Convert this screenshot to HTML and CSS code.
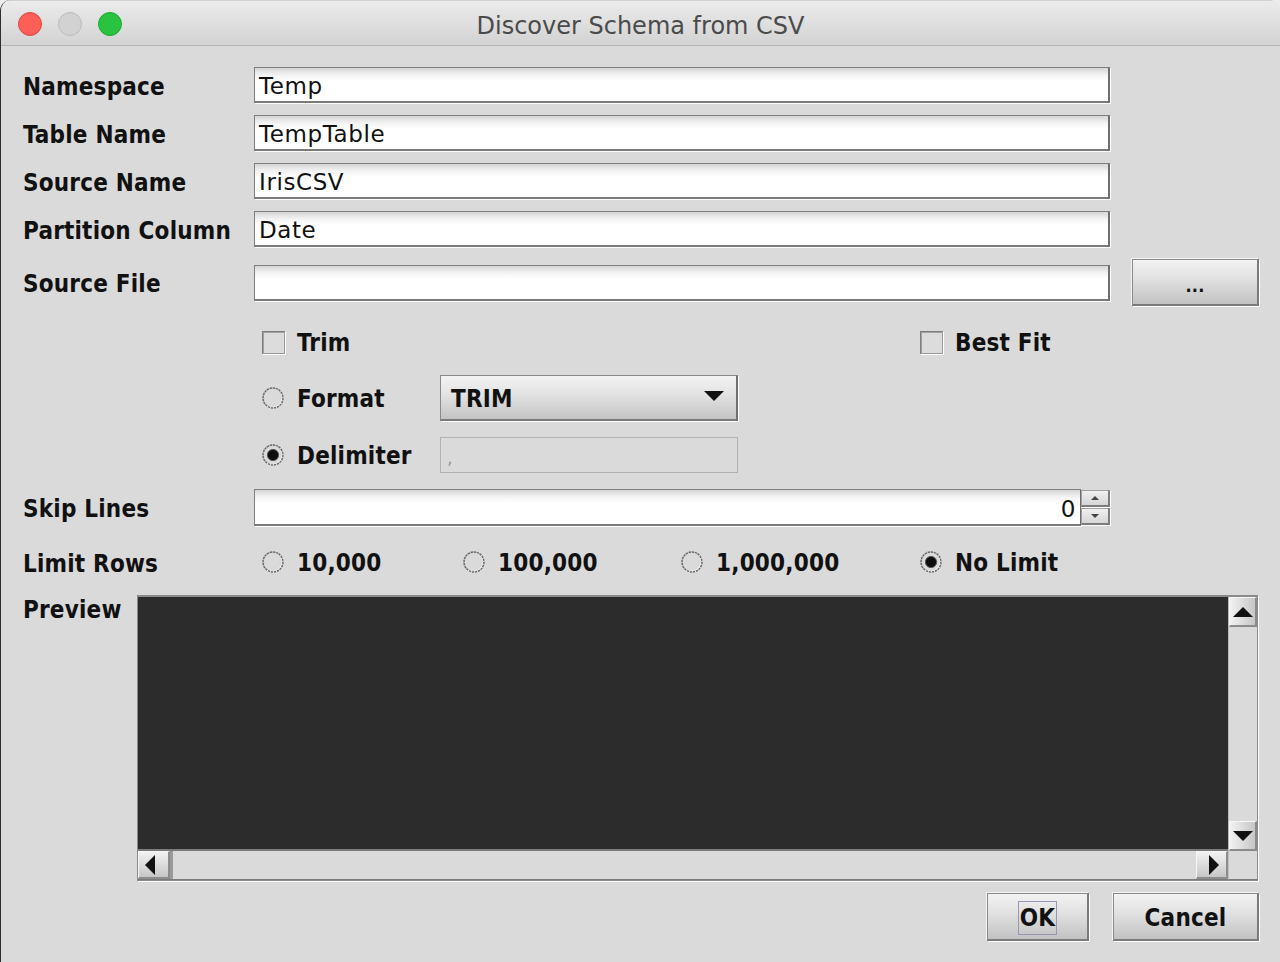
FILE: index.html
```html
<!DOCTYPE html>
<html>
<head>
<meta charset="utf-8">
<title>Discover Schema from CSV</title>
<link rel="stylesheet" href="styles.css">
</head>
<body>
<div class="window">
  <div class="titlebar">
    <div class="lights">
      <span class="light red"></span>
      <span class="light gray"></span>
      <span class="light green"></span>
    </div>
    <div class="title">Discover Schema from CSV</div>
    <div></div>
  </div>

  <div class="content">
    <div class="row r1">
      <div class="lbl">Namespace</div>
      <div class="tf">Temp</div>
    </div>
    <div class="row r2">
      <div class="lbl">Table Name</div>
      <div class="tf">TempTable</div>
    </div>
    <div class="row r2">
      <div class="lbl">Source Name</div>
      <div class="tf">IrisCSV</div>
    </div>
    <div class="row r2">
      <div class="lbl">Partition Column</div>
      <div class="tf">Date</div>
    </div>
    <div class="row file-row">
      <div class="lbl">Source File</div>
      <div class="tf"></div>
      <div class="btn dots">...</div>
    </div>

    <div class="opt-row trim-row">
      <div class="opt w-trim"><span class="cb"></span><span class="opt-text">Trim</span></div>
      <div class="opt"><span class="cb"></span><span class="opt-text">Best Fit</span></div>
    </div>

    <div class="opt-row format-row">
      <div class="opt w-fmt">
        <svg class="radio" viewBox="0 0 24 24" width="24" height="24"><path d="M4.6 19.4 A10.5 10.5 0 0 0 19.4 4.6" fill="none" stroke="#fff" stroke-width="1.8"/><circle cx="12" cy="12" r="10" fill="none" stroke="#6a6a6a" stroke-width="1.5" stroke-dasharray="2.4 0.7"/></svg>
        <span class="opt-text">Format</span>
      </div>
      <div class="combo"><span class="combo-text">TRIM</span><svg class="combo-arrow" viewBox="0 0 20 10" width="20" height="10"><polygon points="0,0 20,0 10,10" fill="#111"/></svg></div>
    </div>

    <div class="opt-row delim-row">
      <div class="opt w-fmt">
        <svg class="radio" viewBox="0 0 24 24" width="24" height="24"><path d="M4.6 19.4 A10.5 10.5 0 0 0 19.4 4.6" fill="none" stroke="#fff" stroke-width="1.8"/><circle cx="12" cy="12" r="10" fill="none" stroke="#6a6a6a" stroke-width="1.5" stroke-dasharray="2.4 0.7"/><circle cx="12" cy="12" r="5.6" fill="#0d0d0d" stroke="#555" stroke-width="1"/></svg>
        <span class="opt-text">Delimiter</span>
      </div>
      <div class="tf disabled">,</div>
    </div>

    <div class="row skip-row">
      <div class="lbl">Skip Lines</div>
      <div class="spinner">
        <div class="tf num">0</div>
        <div class="spin-btns">
          <div class="sb"><svg viewBox="0 0 8 4" width="8" height="4"><polygon points="0,4 8,4 4,0" fill="#444"/></svg></div>
          <div class="sb"><svg viewBox="0 0 8 4" width="8" height="4"><polygon points="0,0 8,0 4,4" fill="#444"/></svg></div>
        </div>
      </div>
    </div>

    <div class="row limit-row">
      <div class="lbl">Limit Rows</div>
      <div class="limits">
        <div class="opt w-l1">
          <svg class="radio" viewBox="0 0 24 24" width="24" height="24"><path d="M4.6 19.4 A10.5 10.5 0 0 0 19.4 4.6" fill="none" stroke="#fff" stroke-width="1.8"/><circle cx="12" cy="12" r="10" fill="none" stroke="#6a6a6a" stroke-width="1.5" stroke-dasharray="2.4 0.7"/></svg>
          <span class="opt-text">10,000</span>
        </div>
        <div class="opt w-l2">
          <svg class="radio" viewBox="0 0 24 24" width="24" height="24"><path d="M4.6 19.4 A10.5 10.5 0 0 0 19.4 4.6" fill="none" stroke="#fff" stroke-width="1.8"/><circle cx="12" cy="12" r="10" fill="none" stroke="#6a6a6a" stroke-width="1.5" stroke-dasharray="2.4 0.7"/></svg>
          <span class="opt-text">100,000</span>
        </div>
        <div class="opt w-l3">
          <svg class="radio" viewBox="0 0 24 24" width="24" height="24"><path d="M4.6 19.4 A10.5 10.5 0 0 0 19.4 4.6" fill="none" stroke="#fff" stroke-width="1.8"/><circle cx="12" cy="12" r="10" fill="none" stroke="#6a6a6a" stroke-width="1.5" stroke-dasharray="2.4 0.7"/></svg>
          <span class="opt-text">1,000,000</span>
        </div>
        <div class="opt">
          <svg class="radio" viewBox="0 0 24 24" width="24" height="24"><path d="M4.6 19.4 A10.5 10.5 0 0 0 19.4 4.6" fill="none" stroke="#fff" stroke-width="1.8"/><circle cx="12" cy="12" r="10" fill="none" stroke="#6a6a6a" stroke-width="1.5" stroke-dasharray="2.4 0.7"/><circle cx="12" cy="12" r="5.6" fill="#0d0d0d" stroke="#555" stroke-width="1"/></svg>
          <span class="opt-text">No Limit</span>
        </div>
      </div>
    </div>

    <div class="preview-row">
      <div class="lbl plbl">Preview</div>
      <div class="scrollpane">
        <div class="viewport"></div>
        <div class="vbar">
          <div class="sbtn vbtn"><svg viewBox="0 0 20 10" width="20" height="10"><polygon points="0,10 20,10 10,0" fill="#111"/></svg></div>
          <div class="vtrack"></div>
          <div class="sbtn vbtn"><svg viewBox="0 0 20 10" width="20" height="10"><polygon points="0,0 20,0 10,10" fill="#111"/></svg></div>
        </div>
        <div class="hbar">
          <div class="sbtn hbtn"><svg viewBox="0 0 10 20" width="10" height="20"><polygon points="10,0 10,20 0,10" fill="#111"/></svg></div>
          <div class="htrack"></div>
          <div class="sbtn hbtn"><svg viewBox="0 0 10 20" width="10" height="20"><polygon points="0,0 0,20 10,10" fill="#111"/></svg></div>
        </div>
        <div class="corner"></div>
      </div>
    </div>

    <div class="buttons">
      <div class="btn ok"><span class="focus">OK</span></div>
      <div class="btn cancel">Cancel</div>
    </div>
  </div>
</div>
</body>
</html>
```

FILE: styles.css
```css
html, body {
  margin: 0;
  padding: 0;
}
body {
  width: 1280px;
  height: 962px;
  overflow: hidden;
  background: #ececec;
  font-family: "DejaVu Sans Condensed", "DejaVu Sans", sans-serif;
  font-stretch: condensed;
  color: #111;
}
.window {
  height: 962px;
  box-sizing: border-box;
  background: #dadada;
  border-left: 1px solid #2e2e2e;
  border-radius: 11px 11px 0 0;
  overflow: hidden;
}
.titlebar {
  height: 44px;
  border-top: 1px solid #d0d0d0;
  border-bottom: 1px solid #b4b4b4;
  box-sizing: content-box;
  background: linear-gradient(#ebebeb, #d3d3d3);
  display: grid;
  grid-template-columns: 1fr auto 1fr;
  align-items: center;
}
.lights {
  display: flex;
  gap: 16px;
  padding-left: 17px;
  margin-top: 2px;
}
.light {
  width: 24px;
  height: 24px;
  border-radius: 50%;
  box-sizing: border-box;
}
.red { background: #fc5f57; border: 1px solid #df4840; }
.gray { background: #d2d2d2; border: 1px solid #bcbcbc; }
.green { background: #2ac33f; border: 1px solid #1ea82f; }
.title {
  font-family: "DejaVu Sans", sans-serif;
  font-stretch: normal;
  font-size: 24px;
  color: #4b4b4b;
  margin-top: 6px;
}

.content {
  padding: 21px 21px 0 22px;
  display: flex;
  flex-direction: column;
}
.row {
  display: flex;
  align-items: center;
}
.lbl {
  width: 231px;
  flex: none;
  font-weight: bold;
  font-size: 24px;
  letter-spacing: 0.2px;
  white-space: nowrap;
  padding-top: 3px;
}
.r1 { height: 36px; }
.r2 { height: 36px; margin-top: 12px; }
.file-row { height: 47px; margin-top: 12px; }

.tf {
  width: 856px;
  height: 36px;
  box-sizing: border-box;
  flex: none;
  border-style: solid;
  border-color: #7f7f7f #6e6e6e #7a7a7a #7f7f7f;
  border-width: 1px 2px 2px 1px;
  box-shadow: 1px 1px 0 #fff;
  background: linear-gradient(#d6d6d6 0, #f3f3f3 7px, #fff 13px);
  font-family: "DejaVu Sans", sans-serif;
  font-stretch: normal;
  font-size: 23px;
  letter-spacing: 0.6px;
  line-height: 36px;
  padding-left: 4px;
  color: #111;
}

.btn {
  box-sizing: border-box;
  border: 1px solid #8a8a8a;
  border-right: 2px solid #7a7a7a;
  border-bottom: 2px solid #7a7a7a;
  box-shadow: 1px 1px 0 #fff, -1px -1px 0 #f4f4f4;
  background: linear-gradient(#f2f2f2, #e2e2e2 40%, #c2c2c2);
  font-weight: bold;
  font-size: 24px;
  letter-spacing: 0.2px;
  display: flex;
  align-items: center;
  justify-content: center;
  color: #111;
  padding-top: 3px;
}
.dots {
  width: 128px;
  height: 47px;
  margin-left: 22px;
  font-size: 18px;
  padding-top: 6px;
}

.opt-row {
  display: flex;
  align-items: center;
  padding-left: 239px;
}
.trim-row { height: 36px; margin-top: 18px; }
.format-row { height: 46px; margin-top: 15px; }
.delim-row { height: 36px; margin-top: 16px; }

.opt {
  display: flex;
  align-items: center;
  flex: none;
}
.opt-text {
  font-weight: bold;
  font-size: 24px;
  letter-spacing: 0.2px;
  margin-left: 12px;
  white-space: nowrap;
  padding-top: 2px;
}
.w-trim { width: 658px; }
.w-fmt { width: 178px; }
.cb {
  width: 23px;
  height: 23px;
  box-sizing: border-box;
  border: 1px solid #7e7e7e;
  border-right-color: #9a9a9a;
  border-bottom-color: #9a9a9a;
  box-shadow: inset 1px 1px 0 #a0a0a0, 1px 1px 0 #fff;
  background: #dcdcdc;
}
.radio {
  flex: none;
  display: block;
  margin-left: -1px;
}

.combo {
  width: 298px;
  height: 46px;
  box-sizing: border-box;
  border: 1px solid #8a8a8a;
  border-right: 2px solid #6f6f6f;
  border-bottom: 2px solid #7a7a7a;
  box-shadow: 1px 1px 0 #fff;
  background: linear-gradient(#f3f3f3, #e4e4e4 40%, #c4c4c4);
  display: flex;
  align-items: center;
  justify-content: space-between;
  padding: 0 12px 0 10px;
  font-weight: bold;
  font-size: 24px;
}
.combo-text { padding-top: 2px; letter-spacing: 0.2px; }
.combo-arrow { display: block; margin-top: -4px; }

.tf.disabled {
  width: 298px;
  background: #dadada;
  border: 1px solid #b2b2b2;
  box-shadow: none;
  color: #9a9a9a;
  font-size: 18px;
  padding-left: 6px;
  line-height: 40px;
}

.skip-row { height: 37px; margin-top: 16px; }
.spinner {
  display: flex;
  width: 856px;
  height: 37px;
}
.tf.num {
  width: 827px;
  height: 37px;
  text-align: right;
  padding-right: 4px;
  border-right-width: 1px;
  line-height: 38px;
}
.spin-btns {
  display: flex;
  flex-direction: column;
  justify-content: space-between;
  width: 29px;
  padding: 1px 0;
  box-sizing: border-box;
}
.sb {
  height: 17px;
  box-sizing: border-box;
  border: 1px solid #a0a0a0;
  border-right: 2px solid #7c7c7c;
  border-bottom: 2px solid #7c7c7c;
  box-shadow: 1px 1px 0 #fff;
  background: linear-gradient(#f0f0f0, #d6d6d6);
  display: flex;
  align-items: center;
  justify-content: center;
}
.sb svg { display: block; }

.limit-row { height: 36px; margin-top: 18px; }
.limits {
  display: flex;
  align-items: center;
  padding-left: 8px;
}
.w-l1 { width: 201px; }
.w-l2 { width: 218px; }
.w-l3 { width: 239px; }

.preview-row {
  display: flex;
  margin-top: 15px;
}
.plbl {
  width: 114px;
  line-height: 30px;
  padding-top: 0;
}
.scrollpane {
  width: 1121px;
  height: 286px;
  box-sizing: border-box;
  border: 1px solid #8a8a8a;
  border-top: 2px solid #8a8a8a;
  box-shadow: 1px 1px 0 #fff;
  display: grid;
  grid-template-columns: 1fr 29px;
  grid-template-rows: 1fr 29px;
}
.viewport {
  background: #2c2c2c;
  border-bottom: 2px solid #7a7a7a;
}
.vbar {
  display: flex;
  flex-direction: column;
  background: #dadada;
  border-left: 1px solid #bcbcbc;
}
.vtrack { flex: 1; }
.sbtn {
  box-sizing: border-box;
  display: flex;
  align-items: center;
  justify-content: center;
  border: 1px solid #f6f6f6;
  border-right: 2px solid #8c8c8c;
  border-bottom: 2px solid #8c8c8c;
}
.sbtn svg { display: block; }
.vbtn {
  height: 30px;
  background: linear-gradient(to right, #f2f2f2, #c6c6c6);
}
.hbar {
  display: flex;
  background: #dadada;
  border-bottom: 1px solid #7a7a7a;
}
.htrack {
  flex: 1;
  border-left: 3px solid #9a9a9a;
}
.hbtn {
  width: 32px;
  background: linear-gradient(#f2f2f2, #c6c6c6);
}
.hbtn:first-child svg { margin-right: 8px; }
.hbtn:last-child svg { margin-right: -4px; }
.corner {
  background: #dadada;
  border-left: 1px solid #c0c0c0;
  border-bottom: 1px solid #7a7a7a;
}

.buttons {
  display: flex;
  justify-content: flex-end;
  gap: 24px;
  margin-top: 12px;
}
.ok {
  width: 102px;
  height: 48px;
}
.cancel {
  width: 146px;
  height: 48px;
}
.focus {
  border: 1px solid #9896b6;
  padding: 0 1px;
  line-height: 32px;
}
```
